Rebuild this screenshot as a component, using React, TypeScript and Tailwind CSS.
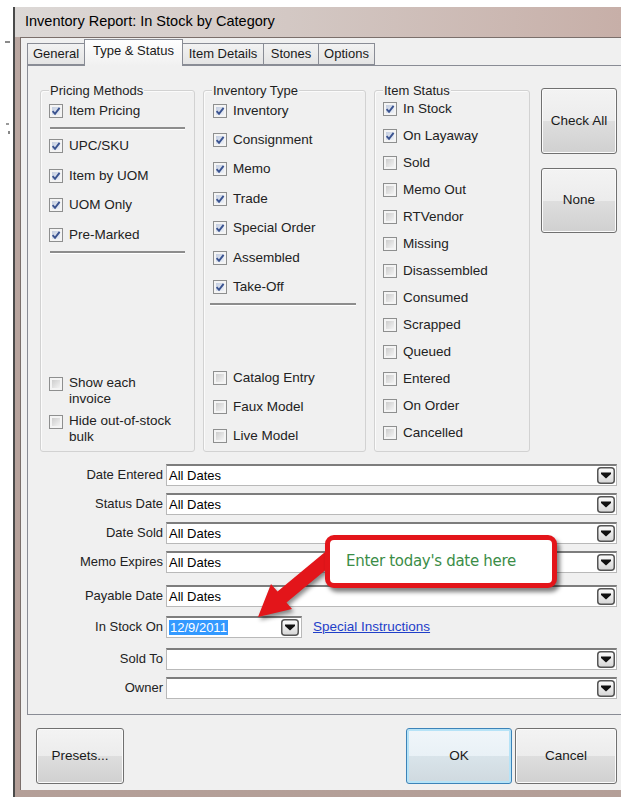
import React from 'react';

type Check = { label: string; checked?: boolean };

const pricing: Check[] = [
  { label: 'UPC/SKU', checked: true },
  { label: 'Item by UOM', checked: true },
  { label: 'UOM Only', checked: true },
  { label: 'Pre-Marked', checked: true },
];

const invTypes: Check[] = [
  { label: 'Inventory', checked: true },
  { label: 'Consignment', checked: true },
  { label: 'Memo', checked: true },
  { label: 'Trade', checked: true },
  { label: 'Special Order', checked: true },
  { label: 'Assembled', checked: true },
  { label: 'Take-Off', checked: true },
];

const models: Check[] = [{ label: 'Catalog Entry' }, { label: 'Faux Model' }, { label: 'Live Model' }];

const statuses: Check[] = [
  { label: 'In Stock', checked: true },
  { label: 'On Layaway', checked: true },
  { label: 'Sold' },
  { label: 'Memo Out' },
  { label: 'RTVendor' },
  { label: 'Missing' },
  { label: 'Disassembled' },
  { label: 'Consumed' },
  { label: 'Scrapped' },
  { label: 'Queued' },
  { label: 'Entered' },
  { label: 'On Order' },
  { label: 'Cancelled' },
];

const dateRows = [
  { label: 'Date Entered', mt: 'mt-[12px]' },
  { label: 'Status Date', mt: 'mt-[7px]' },
  { label: 'Date Sold', mt: 'mt-[7px]' },
  { label: 'Memo Expires', mt: 'mt-[7px]' },
  { label: 'Payable Date', mt: 'mt-[12px]' },
];

function CheckBox({ checked }: { checked?: boolean }) {
  return (
    <span className="relative flex h-[14px] w-[14px] shrink-0 items-center justify-center border border-[#8e8f8f] bg-[#f4f4f4]">
      <span
        className={
          checked
            ? 'absolute inset-[2px] bg-gradient-to-br from-[#c3cde0] to-[#eef1f7]'
            : 'absolute inset-[2px] bg-gradient-to-br from-[#cdcdcd] to-[#f3f3f3]'
        }
      />
      {checked && (
        <svg className="relative" width="10" height="10" viewBox="0 0 10 10">
          <path d="M1.6 5.2 L4 7.8 L8.6 1.8" fill="none" stroke="#3a5390" strokeWidth="1.9" />
        </svg>
      )}
    </span>
  );
}

function CheckRow({ item, className }: { item: Check; className: string }) {
  return (
    <div className={`flex items-center gap-[6px] ${className}`}>
      <CheckBox checked={item.checked} />
      <span className="whitespace-nowrap text-[13.5px] leading-[16px] text-[#222]">{item.label}</span>
    </div>
  );
}

function Group({ title, className, children }: { title: string; className: string; children: React.ReactNode }) {
  return (
    <div className={`relative flex h-[362px] flex-col rounded-[3px] border border-[#d2d2d2] shadow-[inset_1px_1px_0_#fbfbfb] ${className}`}>
      <span className="absolute left-[8px] top-[-8px] bg-[#f0f0f0] px-[1px] text-[13px] leading-[15px] text-[#1e1e1e]">
        {title}
      </span>
      {children}
    </div>
  );
}

function Separator({ className }: { className: string }) {
  return <div className={`h-[3px] border-b border-b-white bg-[#8d8d8d] ${className}`} />;
}

function DropButton() {
  return (
    <svg width="18" height="17" viewBox="0 0 18 17" className="shrink-0">
      <defs>
        <linearGradient id="dropFill" x1="0" y1="0" x2="0" y2="1">
          <stop offset="0" stopColor="#fdfdfd" />
          <stop offset="1" stopColor="#d6d6d6" />
        </linearGradient>
      </defs>
      <rect x="0.75" y="0.75" width="16.5" height="15.5" rx="3" fill="url(#dropFill)" stroke="#555" strokeWidth="1.5" />
      <path d="M4 5.5 H14 V7 L9 11.5 L4 7 Z" fill="#111" />
    </svg>
  );
}

function WinButton({ children, className, focused }: { children: React.ReactNode; className: string; focused?: boolean }) {
  return (
    <div
      className={`flex items-center justify-center rounded-[3px] border text-[13.5px] text-[#1a1a1a] ${
        focused
          ? 'border-[#3c83b8] bg-[linear-gradient(#f0f6fa_0%,#e9f1f6_50%,#d9e4ea_50%,#cfd9df_100%)] shadow-[inset_0_0_0_2px_#b6e3f7]'
          : 'border-[#707070] bg-[linear-gradient(#f3f3f3_0%,#ececec_50%,#dedede_50%,#d0d0d0_100%)] shadow-[inset_0_0_0_1px_#fbfbfb]'
      } ${className}`}
    >
      {children}
    </div>
  );
}

const tabBase = 'flex items-center justify-center border border-[#898c95] text-[13px] text-[#1a1a1a]';

export default function App() {
  return (
    <div className="relative h-[797px] w-[621px] overflow-hidden bg-white font-['Liberation_Sans',Arial,sans-serif]">
      <div className="flex h-full">
        {/* desktop behind the window */}
        <div className="flex w-[13px] flex-col">
          <div className="ml-[5px] mt-[41px] h-[2px] w-[5px] bg-[#8a8a8a]" />
          <div className="ml-[6px] mt-[80px] h-[2px] w-[3px] bg-[#9a9a9a]" />
          <div className="ml-[8px] mt-[6px] h-[3px] w-[2px] bg-[#888]" />
        </div>

        {/* window frame */}
        <div className="mt-[7px] flex flex-1 flex-col border-l-2 border-[#4a4a4a] bg-[linear-gradient(180deg,#bba8a2,#b49f98)] pb-[7px]">
          <div className="flex h-[30px] items-center bg-[linear-gradient(90deg,#dcd8d6_0%,#d3c8c4_45%,#c7afa8_100%)] pl-[10px] text-[14.5px] text-black">
            Inventory Report: In Stock by Category
          </div>

          <div className="ml-[5px] flex flex-1 flex-col border-l border-t border-[#7b6f6b] bg-[#f0f0f0] pl-[6px] pt-[1px]">
            {/* tabs */}
            <div className="flex h-[26px] items-end">
              <div className={`${tabBase} h-[22px] w-[58px] bg-[linear-gradient(#f2f2f2,#e4e4e4)]`}>General</div>
              <div className={`${tabBase} relative z-10 -mb-px -ml-px h-[27px] w-[99px] border-b-0 bg-[linear-gradient(#ffffff,#f0f0f0)] pb-[4px]`}>
                Type &amp; Status
              </div>
              <div className={`${tabBase} -ml-px h-[22px] w-[82px] bg-[linear-gradient(#f2f2f2,#e4e4e4)]`}>Item Details</div>
              <div className={`${tabBase} -ml-px h-[22px] w-[56px] bg-[linear-gradient(#f2f2f2,#e4e4e4)]`}>Stones</div>
              <div className={`${tabBase} -ml-px h-[22px] w-[57px] bg-[linear-gradient(#f2f2f2,#e4e4e4)]`}>Options</div>
            </div>

            {/* tab page */}
            <div className="flex h-[650px] flex-col border border-r-0 border-[#898c95] bg-[#f0f0f0]">
              <div className="ml-[12px] mt-[24px] flex items-start">
                <Group title="Pricing Methods" className="w-[155px]">
                  <CheckRow item={{ label: 'Item Pricing', checked: true }} className="mt-[8px] h-[24px] pl-[8px]" />
                  <Separator className="ml-[9px] mt-[4px] w-[135px]" />
                  <div className="pt-[1.5px]">
                    {pricing.map((p) => (
                      <CheckRow key={p.label} item={p} className="h-[29.5px] pl-[8px]" />
                    ))}
                  </div>
                  <Separator className="ml-[9px] mt-[1px] w-[135px]" />
                  <div className="mt-auto flex flex-col gap-[6px] pb-[6px] pl-[8px]">
                    <div className="flex items-start gap-[6px]">
                      <span className="mt-[2px]">
                        <CheckBox />
                      </span>
                      <span className="text-[13.5px] leading-[16px] text-[#222]">
                        Show each
                        <br />
                        invoice
                      </span>
                    </div>
                    <div className="flex items-start gap-[6px]">
                      <span className="mt-[2px]">
                        <CheckBox />
                      </span>
                      <span className="text-[13.5px] leading-[16px] text-[#222]">
                        Hide out-of-stock
                        <br />
                        bulk
                      </span>
                    </div>
                  </div>
                </Group>

                <Group title="Inventory Type" className="ml-[8px] w-[163px]">
                  <div className="pt-[5px]">
                    {invTypes.map((t) => (
                      <CheckRow key={t.label} item={t} className="h-[29.4px] pl-[9px]" />
                    ))}
                  </div>
                  <Separator className="ml-[6px] mt-[1px] w-[146px]" />
                  <div className="mt-auto pb-[1px]">
                    {models.map((m) => (
                      <CheckRow key={m.label} item={m} className="h-[29px] pl-[9px]" />
                    ))}
                  </div>
                </Group>

                <Group title="Item Status" className="ml-[8px] w-[156px]">
                  <div className="pt-[4.5px]">
                    {statuses.map((s) => (
                      <CheckRow key={s.label} item={s} className="h-[27px] pl-[8px]" />
                    ))}
                  </div>
                </Group>

                <div className="-mt-[2px] ml-[11px] flex flex-col gap-[14px]">
                  <WinButton className="h-[66px] w-[76px]">Check All</WinButton>
                  <WinButton className="h-[65px] w-[76px]">None</WinButton>
                </div>
              </div>

              {/* date filters */}
              {dateRows.map((r) => (
                <div key={r.label} className={`flex items-center ${r.mt}`}>
                  <span className="w-[135px] whitespace-nowrap text-right text-[13px] text-[#222]">{r.label}</span>
                  <div className="ml-[3px] flex h-[22px] w-[451px] items-center justify-between border border-[#b9b9b9] border-t-2 border-t-[#7d7d7d] bg-white pl-[2px] pr-[1px]">
                    <span className="text-[13px] text-black">All Dates</span>
                    <DropButton />
                  </div>
                </div>
              ))}

              <div className="mt-[9px] flex items-center">
                <span className="w-[135px] text-right text-[13px] text-[#222]">In Stock On</span>
                <div className="ml-[3px] flex h-[22px] w-[136px] items-center justify-between border border-[#b9b9b9] border-t-2 border-t-[#7d7d7d] bg-white pl-[2px] pr-[2px]">
                  <span className="bg-[#3399ff] px-[1px] text-[13px] leading-[15px] text-white">12/9/2011</span>
                  <DropButton />
                </div>
                <span className="ml-[11px] text-[13.5px] text-[#1f3fc9] underline">Special Instructions</span>
              </div>

              {['Sold To', 'Owner'].map((label, i) => (
                <div key={label} className={`flex items-center ${i === 0 ? 'mt-[10px]' : 'mt-[7px]'}`}>
                  <span className="w-[135px] text-right text-[13px] text-[#222]">{label}</span>
                  <div className="ml-[3px] flex h-[22px] w-[451px] items-center justify-end border border-[#b9b9b9] border-t-2 border-t-[#7d7d7d] bg-white pr-[1px]">
                    <DropButton />
                  </div>
                </div>
              ))}
            </div>

            {/* dialog buttons */}
            <div className="mt-[13px] flex pr-[4px]">
              <WinButton className="ml-[9px] h-[56px] w-[88px]">Presets...</WinButton>
              <div className="flex-1" />
              <WinButton focused className="h-[56px] w-[106px]">
                OK
              </WinButton>
              <WinButton className="ml-[3px] h-[56px] w-[102px]">Cancel</WinButton>
            </div>
          </div>
        </div>
      </div>

      {/* annotation arrow */}
      <svg
        className="pointer-events-none absolute left-[250px] top-[540px] drop-shadow-[2px_3px_2px_rgba(0,0,0,0.45)]"
        width="100"
        height="85"
        viewBox="0 0 100 85"
      >
        <polygon
          points="89.5,18.5 36.5,62.5 42,69 8,77 21,44 27.5,51.5 80.5,7.5"
          fill="#e3151a"
        />
      </svg>

      {/* annotation callout */}
      <div className="absolute left-[325px] top-[535px] flex h-[53px] w-[232px] items-center rounded-[9px] border-[5px] border-[#e3151a] bg-white pl-[16px] shadow-[3px_4px_4px_rgba(0,0,0,0.5)]">
        <span className="font-['DejaVu_Sans',sans-serif] text-[15px] tracking-[-0.3px] text-[#3b8d47]">
          Enter today's date here
        </span>
      </div>
    </div>
  );
}
